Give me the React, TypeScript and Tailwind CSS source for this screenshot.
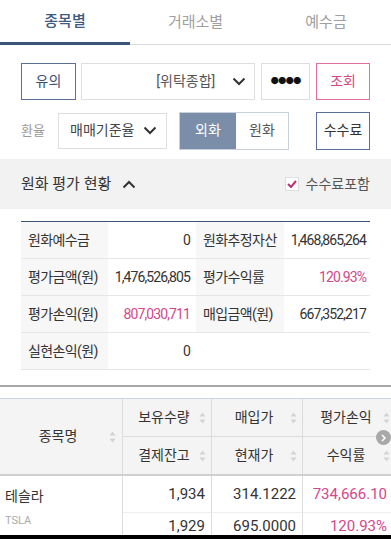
import React from "react";

const FONT = { fontFamily: "Roboto, 'Noto Sans CJK KR', 'Noto Sans', sans-serif" };

const Chevron = ({ up = false, className = "" }: { up?: boolean; className?: string }) => (
  <svg width="14" height="9" viewBox="0 0 14 9" className={className}>
    <path d={up ? "M1.5 7.5 L7 2 L12.5 7.5" : "M1.5 1.5 L7 7 L12.5 1.5"} fill="none" stroke="#333" strokeWidth="2" />
  </svg>
);

const Sort = ({ className = "" }: { className?: string }) => (
  <svg width="7" height="12" viewBox="0 0 7 12" className={className}>
    <path d="M3.5 0.5 L6.5 4.5 L0.5 4.5 Z" fill="#d3d3d3" />
    <path d="M3.5 11.5 L6.5 7.5 L0.5 7.5 Z" fill="#d3d3d3" />
  </svg>
);

const summary = [
  ["원화예수금", "0", "원화추정자산", "1,468,865,264"],
  ["평가금액(원)", "1,476,526,805", "평가수익률", "120.93%"],
  ["평가손익(원)", "807,030,711", "매입금액(원)", "667,352,217"],
  ["실현손익(원)", "0", "", ""],
];

const pinkValues = ["120.93%", "807,030,711"];

export default function App() {
  return (
    <div className="w-[391px] h-[539px] bg-white overflow-hidden relative text-[#333]" style={FONT}>
      {/* Tabs */}
      <div className="flex h-[45px] border-b border-[#dcdcdc]">
        <div className="w-[130px] flex items-center justify-center text-[15px] font-medium text-[#3d5a80] border-b-[3px] border-[#3b5578] -mb-px">
          종목별
        </div>
        <div className="flex-1 flex items-center justify-center text-[15px] text-[#a0a0a0]">거래소별</div>
        <div className="w-[130px] flex items-center justify-center text-[15px] text-[#a0a0a0]">예수금</div>
      </div>

      {/* Controls */}
      <div className="px-[21px] pt-[18px]">
        <div className="flex h-[37px]">
          <button className="w-[55px] border border-[#5b6f99] text-[14px] text-[#3d4f75]">유의</button>
          <div className="ml-[5px] w-[175px] border border-[#dedede] flex items-center justify-end pr-[8px] text-[14px] text-[#555]">
            <span>[위탁종합]</span>
            <Chevron className="ml-[17px]" />
          </div>
          <div className="ml-[6px] w-[49px] border border-[#dedede] flex items-center justify-center text-[8px] tracking-[-0.5px] text-[#111]">
            ●●●●
          </div>
          <button className="ml-[6px] w-[54px] border border-[#e2709f] text-[14px] text-[#d6457f]">조회</button>
        </div>

        <div className="flex h-[37px] mt-[12px] items-center">
          <span className="w-[37px] text-[13px] text-[#999]">환율</span>
          <div className="w-[109px] h-[36px] border border-[#dedede] flex items-center pl-[11px] pr-[9px] justify-between text-[14px] text-[#444]">
            <span>매매기준율</span>
            <Chevron />
          </div>
          <div className="ml-[12px] flex h-[38px] border border-[#c9d0da]">
            <div className="w-[56px] bg-[#7a8ea9] flex items-center justify-center text-[14px] text-white">외화</div>
            <div className="w-[52px] flex items-center justify-center text-[14px] text-[#555]">원화</div>
          </div>
          <button className="ml-auto w-[54px] h-[38px] border border-[#5b6f99] text-[14px] text-[#333]">수수료</button>
        </div>
      </div>

      {/* Section header */}
      <div className="mt-[10px] h-[50px] bg-[#f2f2f2] flex items-center px-[21px]">
        <span className="text-[15px] text-[#333]">원화 평가 현황</span>
        <Chevron up className="ml-[11px]" />
        <div className="ml-auto flex items-center">
          <div className="w-[14px] h-[14px] bg-white border border-[#ddd] flex items-center justify-center">
            <svg width="10" height="8" viewBox="0 0 10 8">
              <path d="M1 4 L4 7 L9 1" fill="none" stroke="#c2306b" strokeWidth="2" />
            </svg>
          </div>
          <span className="ml-[7px] text-[14px] text-[#555]">수수료포함</span>
        </div>
      </div>

      {/* Summary table */}
      <div className="mx-[21px] mt-[12px] border-t border-[#3b5578]">
        {summary.map((row, i) => (
          <div key={i} className="grid grid-cols-[87px_88px_88px_87px] h-[37px] border-b border-[#e6e6e6] text-[14px]">
            <div className="bg-[#f7f7f7] flex items-center pl-[7px] tracking-[-0.6px]">{row[0]}</div>
            <div className={`flex items-center justify-end pr-[6px] tracking-[-0.9px] ${pinkValues.includes(row[1]) ? "text-[#d4478a]" : "text-[#333]"}`}>{row[1]}</div>
            <div className={`${i < 3 ? "bg-[#f7f7f7]" : ""} flex items-center pl-[7px] tracking-[-0.6px]`}>{row[2]}</div>
            <div className={`flex items-center justify-end pr-[5px] tracking-[-0.9px] ${pinkValues.includes(row[3]) ? "text-[#d4478a]" : "text-[#333]"}`}>{row[3]}</div>
          </div>
        ))}
      </div>

      {/* Divider */}
      <div className="mt-[15px] h-[2px] bg-[#a9a9a9]" />

      {/* Holdings table */}
      <div className="mt-[11px] border-t border-[#c9d5e2] w-[395px]">
        <div className="grid grid-cols-[123px_89px_91px_92px] bg-[#f4f4f4] border-b-2 border-[#cfcfcf] text-[14px] text-[#333]">
          <div className="row-span-2 border-r border-[#dcdcdc] flex items-center justify-center relative">
            <span className="-ml-[6px]">종목명</span>
            <Sort className="absolute right-[6px] top-1/2 -translate-y-1/2" />
          </div>
          {["보유수량", "매입가", "평가손익"].map((t, i) => (
            <div key={t} className={`h-[38px] border-b border-[#dcdcdc] ${i < 2 ? "border-r" : ""} flex items-center justify-center relative`}>
              <span className="-ml-[6px]">{t}</span>
              <Sort className="absolute right-[5px] top-1/2 -translate-y-1/2" />
            </div>
          ))}
          {["결제잔고", "현재가", "수익률"].map((t, i) => (
            <div key={t} className={`h-[37px] ${i < 2 ? "border-r border-[#dcdcdc]" : ""} flex items-center justify-center relative`}>
              <span className="-ml-[6px]">{t}</span>
              <Sort className="absolute right-[5px] top-1/2 -translate-y-1/2" />
            </div>
          ))}
        </div>

        <div className="grid grid-cols-[123px_89px_91px_92px] text-[15px]">
          <div className="row-span-2 border-r border-[#dcdcdc] pl-[5px] pt-[10px]">
            <div className="text-[14px] text-[#333]">테슬라</div>
            <div className="text-[11px] text-[#aaa] mt-[6px]">TSLA</div>
          </div>
          <div className="h-[37px] border-b border-[#eee] border-r border-r-[#dcdcdc] flex items-center justify-end pr-[6px]">1,934</div>
          <div className="h-[37px] border-b border-[#eee] border-r border-r-[#dcdcdc] flex items-center justify-end pr-[6px]">314.1222</div>
          <div className="h-[37px] border-b border-[#eee] flex items-center justify-end pr-[8px] text-[#d4478a]">734,666.10</div>
          <div className="h-[26px] border-r border-[#dcdcdc] flex items-center justify-end pr-[6px]">1,929</div>
          <div className="h-[26px] border-r border-[#dcdcdc] flex items-center justify-end pr-[6px]">695.0000</div>
          <div className="h-[26px] flex items-center justify-end pr-[8px] text-[#d4478a]">120.93%</div>
        </div>
      </div>

      {/* scroll hint */}
      <div className="absolute left-[376px] top-[430px] w-[15px] h-[15px] rounded-full bg-[#a8a8a8] flex items-center justify-center">
        <svg width="7" height="8" viewBox="0 0 7 8">
          <path d="M2 1 L5 4 L2 7" fill="none" stroke="#fff" strokeWidth="1.6" />
        </svg>
      </div>

      {/* bottom bar */}
      <div className="absolute left-0 right-0 bottom-0 h-[4px] bg-black" />
    </div>
  );
}
